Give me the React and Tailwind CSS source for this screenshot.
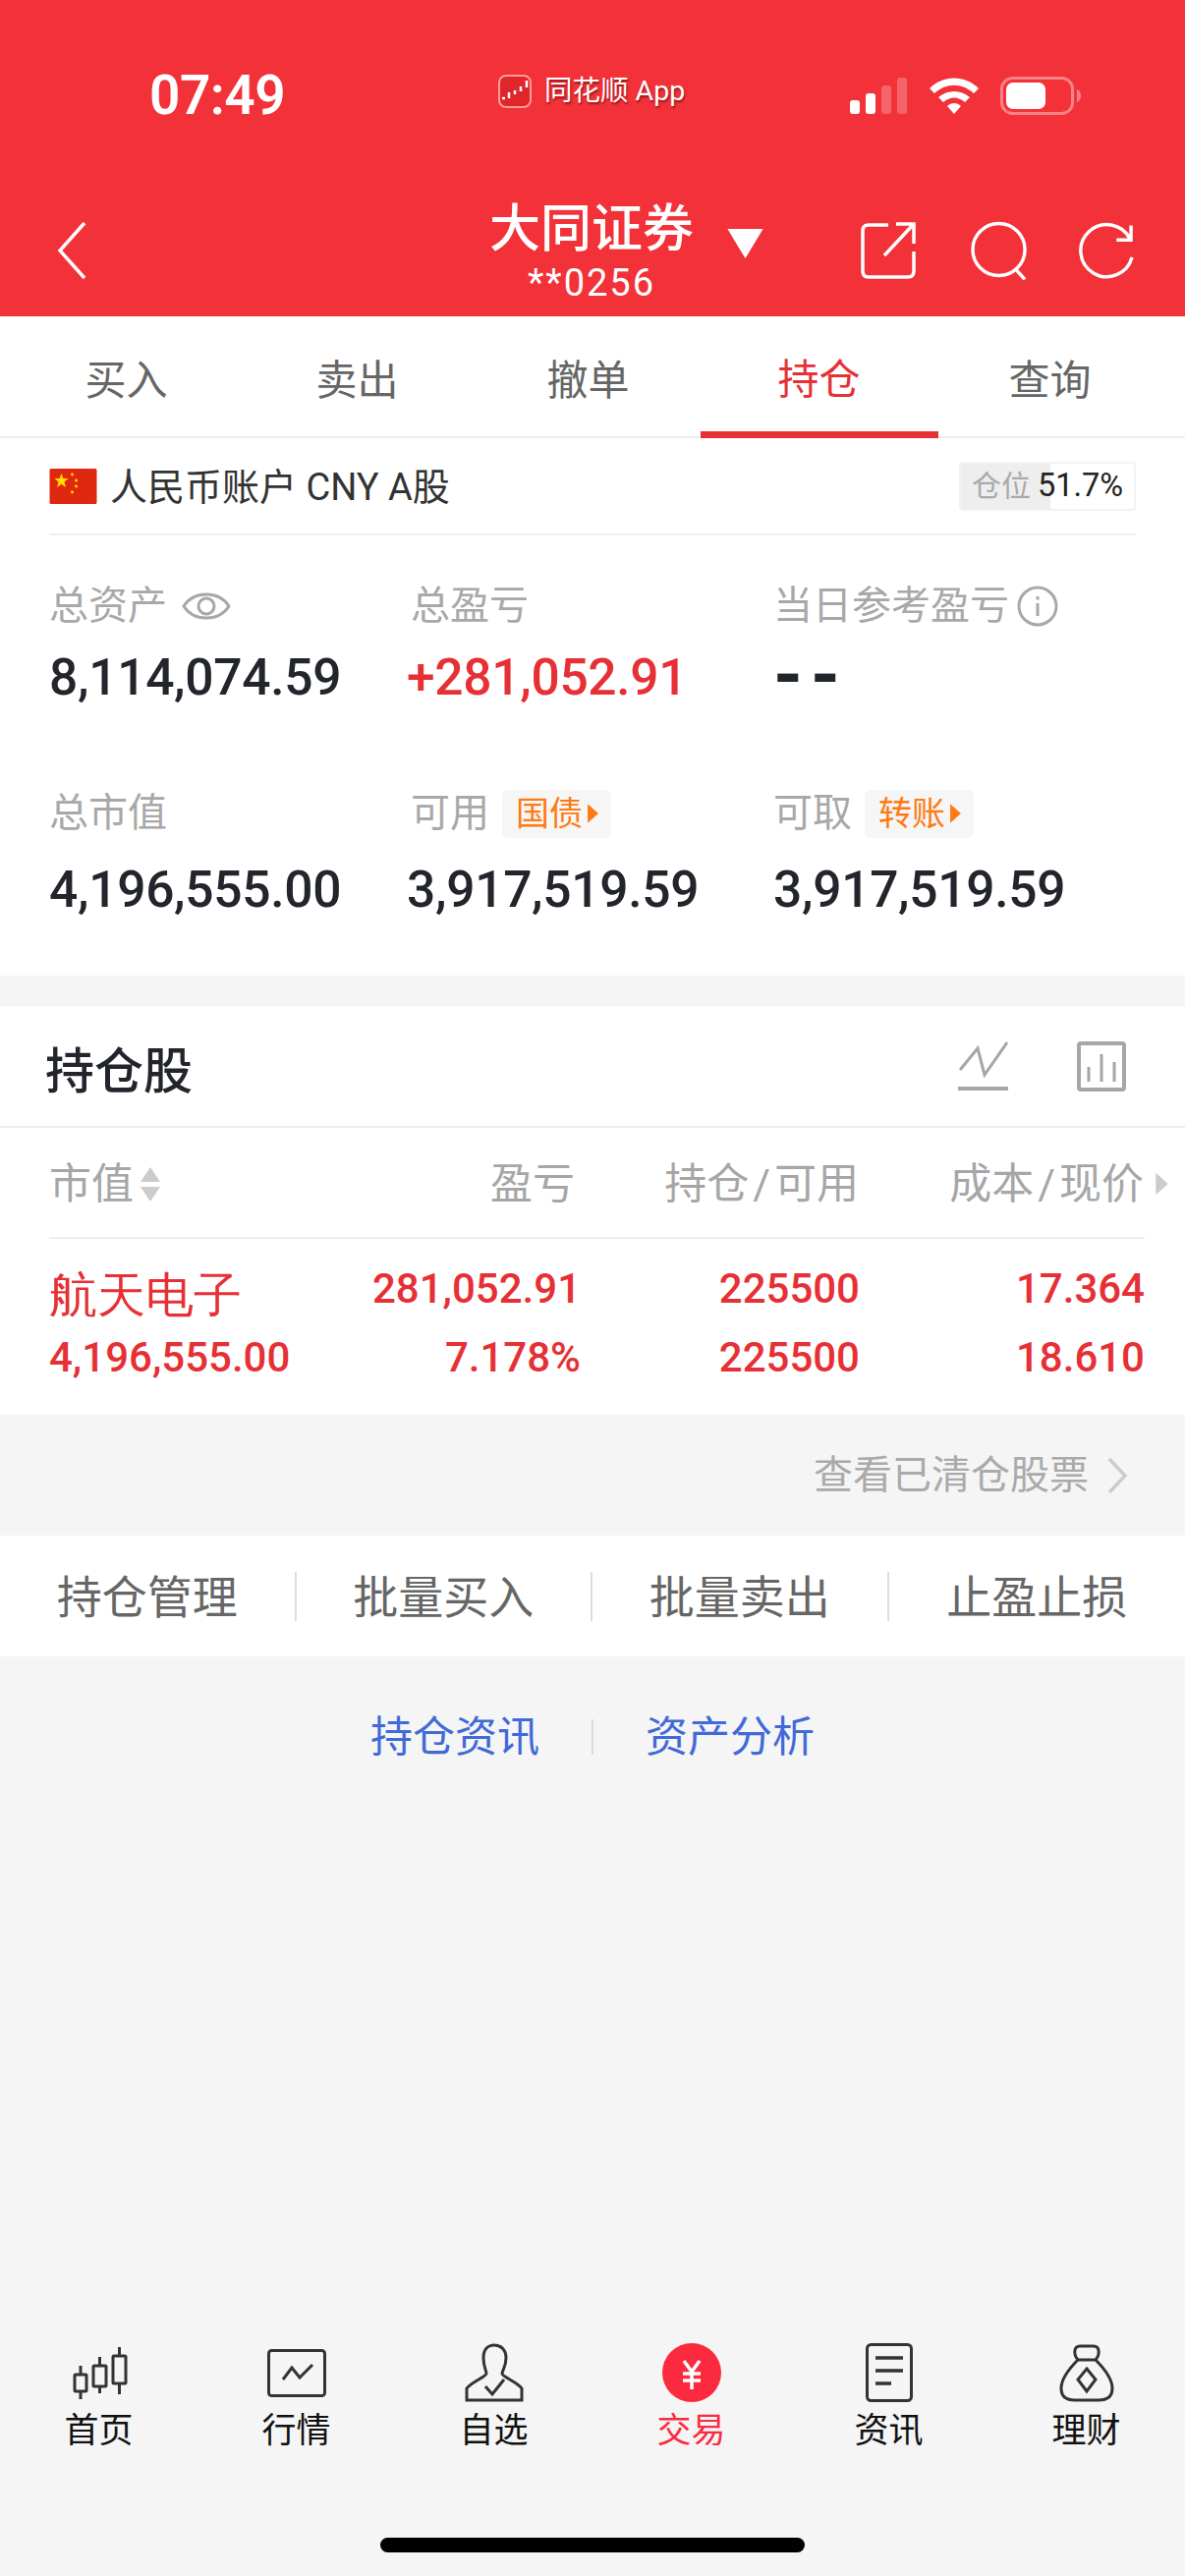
import React from 'react';

const RED = 'text-[#e63035]';

const Caret = ({ className }) => (
  <svg viewBox="0 0 12 20" className={className}>
    <polygon points="1,1 11,10 1,19" fill="currentColor" />
  </svg>
);

const StatusBar = () => (
  <div className="flex items-center h-[54px] mt-[70px] pl-[152px] text-white">
    <div className="w-[139px] text-[55px] font-semibold leading-none tracking-[-0.5px] font-['Roboto',sans-serif]">07:49</div>
    <div className="flex items-center mb-[8px] ml-[216px] w-[189px]">
      <svg viewBox="0 0 34 34" className="w-[34px] h-[34px] shrink-0">
        <rect x="1" y="1" width="32" height="32" rx="7" fill="#e0262b" stroke="#ff9a9a" strokeWidth="2" />
        <path d="M4 24h3M11 24v-6M17 20v-4M23 17v-5M29 13V6" stroke="#fff" strokeWidth="2.5" fill="none" />
      </svg>
      <span className="ml-[13px] text-[28.500px] leading-none whitespace-nowrap [text-shadow:1px_2px_2px_rgba(90,0,0,0.6)]">同花顺 App</span>
    </div>
    <svg viewBox="0 0 58 37" className="ml-[169px] w-[58px] h-[37px]">
      <rect x="0" y="23" width="10" height="14" rx="3" fill="#fff" />
      <rect x="16" y="16" width="10" height="21" rx="3" fill="#fff" />
      <rect x="32" y="8" width="10" height="29" rx="3" fill="#fff" fillOpacity="0.25" />
      <rect x="48" y="0" width="10" height="37" rx="3" fill="#fff" fillOpacity="0.25" />
    </svg>
    <svg viewBox="0 0 50 37" className="ml-[23px] w-[50px] h-[37px]">
      <path d="M0 11 C14 -3 36 -3 50 11 L45 16 C33 5 17 5 5 16 Z" fill="#fff" />
      <path d="M9 20 C18 12 32 12 41 20 L36 25 C29 19 21 19 14 25 Z" fill="#fff" />
      <path d="M18 29 C22 25 28 25 32 29 L25 37 Z" fill="#fff" />
    </svg>
    <svg viewBox="0 0 82 39" className="ml-[22px] w-[82px] h-[39px]">
      <rect x="1.5" y="1.5" width="72" height="36" rx="11" fill="none" stroke="#fff" strokeOpacity="0.4" strokeWidth="3" />
      <rect x="6" y="6" width="40" height="27" rx="7" fill="#fff" />
      <path d="M78 13 C81 14 82 17 82 19.5 C82 22 81 25 78 26 Z" fill="#fff" fillOpacity="0.4" />
    </svg>
  </div>
);

const NavBar = () => (
  <div className="flex items-center h-[110px] mt-[76px] pl-[58px] text-white">
    <svg viewBox="0 0 30 60" className="w-[30px] h-[60px]">
      <polyline points="28,2 3,30 28,58" fill="none" stroke="#fff" strokeWidth="3.5" />
    </svg>
    <div className="flex flex-col items-center gap-[5px] mt-[3px] ml-[411px] w-[206px]">
      <div className="h-[58px] flex items-center text-[52px] font-medium leading-none whitespace-nowrap">大同证券</div>
      <div className="h-[40px] flex items-center text-[38px] leading-none tracking-[2px] whitespace-nowrap font-['Roboto',sans-serif]">**0256</div>
    </div>
    <svg viewBox="0 0 35 29" className="ml-[35px] mb-[14px] w-[37px] h-[30px]">
      <polygon points="0,0 35,0 17.5,29" fill="#fff" />
    </svg>
    <svg viewBox="0 0 56 58" className="ml-[99px] w-[56px] h-[58px]" fill="none" stroke="#fff" strokeWidth="3.5">
      <path d="M28 3 H8 Q2 3 2 9 V50 Q2 56 8 56 H48 Q54 56 54 50 V30" />
      <path d="M24 34 L53 3 M36 2 H54 V22" />
    </svg>
    <svg viewBox="0 0 60 60" className="ml-[56px] w-[59px] h-[60px]" fill="none" stroke="#fff" strokeWidth="3.5">
      <circle cx="29" cy="29" r="27" />
      <path d="M46 49 L56 60" />
    </svg>
    <svg viewBox="0 0 58 58" className="ml-[50px] w-[57px] h-[58px]" fill="none" stroke="#fff" strokeWidth="3.5">
      <path d="M54 17 A27 27 0 1 0 56 36" />
      <path d="M55 3 V18 H40" />
    </svg>
  </div>
);

const tabs = ['买入', '卖出', '撤单', '持仓', '查询'];

const Tabs = () => (
  <div className="grid grid-cols-[repeat(5,235px)] px-[11px] h-[124px] border-b-2 border-[#eeeeee] bg-white">
    {tabs.map((t) => (
      <div
        key={t}
        className={
          t === '持仓'
            ? 'justify-self-center w-[242px] h-[124px] pt-[12px] flex items-center justify-center text-[42px] text-[#e63035] border-b-[7px] border-[#e63035]'
            : 'h-[122px] pt-[8px] flex items-center justify-center text-[42px] text-[#666666]'
        }
      >
        {t}
      </div>
    ))}
  </div>
);

const AccountRow = () => (
  <div className="flex items-center h-[99px] mx-[50px] border-b-2 border-[#f0f0f0]">
    <svg viewBox="0 0 48 36" className="w-[49px] h-[36px] rounded-[2px]">
      <rect width="48" height="36" fill="#de2910" />
      <polygon points="12,5 13.8,10 19,10 15,13.500 16.500,19 12,15.800 7.500,19 9,13.500 5,10 10.200,10" fill="#ffde00" />
      <circle cx="23" cy="6" r="1.400" fill="#ffde00" />
      <circle cx="27" cy="12" r="1.400" fill="#ffde00" />
      <circle cx="27" cy="18" r="1.400" fill="#ffde00" />
      <circle cx="23" cy="24" r="1.400" fill="#ffde00" />
    </svg>
    <span className="ml-[13px] pt-[3px] text-[38px] text-[#333333] whitespace-nowrap">人民币账户 CNY A股</span>
    <div className="ml-auto relative flex items-center w-[180px] h-[50px] border-2 border-[#f2f2f2] rounded-[4px] overflow-hidden">
      <div className="absolute left-0 top-0 bottom-0 w-[91px] bg-[#eeeeee]" />
      <span className="relative ml-[11px] text-[30px] text-[#aaaaaa] whitespace-nowrap">仓位</span>
      <span className="relative ml-[7px] text-[32.500px] text-[#222222] whitespace-nowrap font-['Roboto',sans-serif]">51.7%</span>
    </div>
  </div>
);

const Tag = ({ children }) => (
  <span className="ml-[13px] flex items-center w-[111px] h-[49px] pl-[14px] bg-[#f6f6f6] rounded-[6px] text-[34px] text-[#ff7a12] whitespace-nowrap">
    {children}
    <Caret className="w-[13px] h-[22px] ml-[4px]" />
  </span>
);

const Stat = ({ label, extra, value, color = 'text-[#22252b]', valueClass = 'mt-[18px]', shift = 'text-[51.500px] font-medium tracking-[-0.3px]' }) => (
  <div>
    <div className="flex items-center h-[50px]">
      <span className="text-[40px] text-[#a8a8a8] whitespace-nowrap">{label}</span>
      {extra}
    </div>
    <div className={`h-[60px] flex items-center leading-none whitespace-nowrap font-['Roboto',sans-serif] ${valueClass} ${color} ${shift}`}>
      {value}
    </div>
  </div>
);

const EyeIcon = () => (
  <svg viewBox="0 0 50 36" className="ml-[15px] w-[50px] h-[36px]" fill="none" stroke="#a8a8a8" strokeWidth="3">
    <path d="M2 18 C12 2 38 2 48 18 C38 34 12 34 2 18 Z" />
    <circle cx="25" cy="18" r="8" />
  </svg>
);

const InfoIcon = () => (
  <svg viewBox="0 0 42 42" className="ml-[8px] w-[42px] h-[42px]" fill="none" stroke="#a8a8a8" strokeWidth="3">
    <circle cx="21" cy="21" r="19" />
    <path d="M21 18 V31 M21 11 V14.500" />
  </svg>
);

const Stats = () => (
  <div className="grid grid-cols-[368px_369px_1fr] gap-y-[83px] pl-[50px] pt-[47px] pb-[57px]">
    <Stat label="总资产" extra={<EyeIcon />} value="8,114,074.59" />
    <Stat label="总盈亏" value="+281,052.91" color={RED} shift="ml-[-4px] text-[51.500px] font-medium tracking-[-0.3px]" />
    <Stat label="当日参考盈亏" extra={<InfoIcon />} value="--" valueClass="mt-[15px]" shift="text-[76px] font-bold tracking-[8px]" />
    <Stat label="总市值" value="4,196,555.00" valueClass="mt-[23px]" />
    <Stat label="可用" extra={<Tag>国债</Tag>} value="3,917,519.59" valueClass="mt-[23px]" shift="ml-[-4px] text-[51.500px] font-medium tracking-[-0.3px]" />
    <Stat label="可取" extra={<Tag>转账</Tag>} value="3,917,519.59" valueClass="mt-[23px]" />
  </div>
);

const HoldingsHeader = () => (
  <div className="flex items-center h-[124px] pl-[46px] border-b-2 border-[#eeeeee]">
    <span className="mt-[12px] text-[50px] font-medium text-[#22252b]">持仓股</span>
    <svg viewBox="0 0 51 51" className="ml-auto w-[51px] h-[51px]" fill="none" stroke="#a6a6a6" strokeWidth="3">
      <polyline points="2,29 20,7 27,34 50,1" />
      <path d="M0 48 H51" strokeWidth="4" />
    </svg>
    <svg viewBox="0 0 50 51" className="ml-[70px] mr-[60px] w-[50px] h-[51px]" fill="none" stroke="#a6a6a6" strokeWidth="4">
      <rect x="2" y="2" width="46" height="47" rx="2" />
      <path d="M12 26 V41 M25 13 V41 M38 21 V41" strokeWidth="3" />
    </svg>
  </div>
);

const TableHeader = () => (
  <div className="grid grid-cols-[250px_290px_284px_290px] items-center h-[113px] pt-[4px] ml-[50px] mr-[41px] border-b-2 border-[#eeeeee] text-[43px] text-[#a6a6a6] relative">
    <div className="flex items-center">
      <span>市值</span>
      <svg viewBox="0 0 22 36" className="ml-[6px] w-[22px] h-[36px]">
        <polygon points="11,0 21,15 1,15" fill="#cccccc" />
        <polygon points="1,20 21,20 11,35" fill="#cccccc" />
      </svg>
    </div>
    <div className="text-right pr-[5px]">盈亏</div>
    <div className="text-right whitespace-nowrap">持仓<span className="mx-[4px] font-['Roboto',sans-serif]">/</span>可用</div>
    <div className="text-right whitespace-nowrap">成本<span className="mx-[4px] font-['Roboto',sans-serif]">/</span>现价</div>
    <Caret className="absolute left-[1125px] top-[43px] w-[15px] h-[28px] text-[#cccccc]" />
  </div>
);

const HoldingRow = () => (
  <div className="pt-[16px] pb-[23px] pl-[50px] pr-[41px] text-[42px] font-medium leading-none text-[#e63035] font-['Roboto',sans-serif]">
    <div className="grid grid-cols-[250px_291px_284px_290px] items-center h-[70px]">
      <div className="pt-[12px] text-[49px] font-normal whitespace-nowrap">航天电子</div>
      <div className="text-right">281,052.91</div>
      <div className="text-right">225500</div>
      <div className="text-right">17.364</div>
    </div>
    <div className="grid grid-cols-[250px_291px_284px_290px] items-center h-[70px]">
      <div className="whitespace-nowrap">4,196,555.00</div>
      <div className="text-right">7.178%</div>
      <div className="text-right">225500</div>
      <div className="text-right">18.610</div>
    </div>
  </div>
);

const actions = ['持仓管理', '批量买入', '批量卖出', '止盈止损'];

const Actions = () => (
  <div className="grid grid-cols-4 items-center h-[123px] bg-white">
    {actions.map((a) => (
      <div key={a} className="h-[50px] flex items-center justify-center text-[46px] text-[#666666] border-r-2 border-[#dddddd] last:border-r-0 whitespace-nowrap">
        <span className="pt-[4px]">{a}</span>
      </div>
    ))}
  </div>
);

const navItems = [
  {
    label: '首页',
    icon: (
      <svg viewBox="0 0 60 60" className="w-[60px] h-[60px]" fill="none" stroke="#333333" strokeWidth="3">
        <rect x="5" y="32" width="12" height="17" rx="1" />
        <path d="M11 23 V32 M11 49 V57" />
        <rect x="24" y="23" width="13" height="21" rx="1" />
        <path d="M30.500 14 V23 M30.500 44 V51" />
        <rect x="44" y="13" width="13" height="28" rx="1" />
        <path d="M50.500 4 V13 M50.500 41 V52" />
      </svg>
    ),
  },
  {
    label: '行情',
    icon: (
      <svg viewBox="0 0 60 60" className="w-[60px] h-[60px]" fill="none" stroke="#333333" strokeWidth="3">
        <rect x="1.500" y="7.500" width="57" height="46" rx="3" />
        <polyline points="16,37 25,25 33,35 46,22" />
      </svg>
    ),
  },
  {
    label: '自选',
    icon: (
      <svg viewBox="0 0 60 60" className="w-[60px] h-[60px]" fill="none" stroke="#333333" strokeWidth="3">
        <path d="M19 15 C19 6 24 2 30 2 C36 2 42 6 42 15 C42 24 38 28 38 31 C38 34 54 40 58 46 L58 58 L2 58 L2 46 C6 40 22 34 22 31 C22 28 19 24 19 15 Z" />
        <polyline points="21,44 28,52 40,37" />
      </svg>
    ),
  },
  {
    label: '交易',
    active: true,
    icon: (
      <svg viewBox="0 0 60 60" className="w-[60px] h-[60px]">
        <circle cx="30" cy="30" r="30" fill="#fc2a3e" />
        <path d="M22 18 L30 29 L38 18 M21 31 H39 M21 38 H39 M30 29 V47" fill="none" stroke="#ffffff" strokeWidth="3.500" />
      </svg>
    ),
  },
  {
    label: '资讯',
    icon: (
      <svg viewBox="0 0 48 60" className="w-[48px] h-[60px]" fill="none" stroke="#333333" strokeWidth="3">
        <rect x="1.500" y="1.500" width="45" height="57" rx="4" />
        <path d="M10 15 H38 M10 28 H38 M10 41 H26" strokeWidth="3.500" />
      </svg>
    ),
  },
  {
    label: '理财',
    icon: (
      <svg viewBox="0 0 56 60" className="w-[56px] h-[60px]" fill="none" stroke="#333333" strokeWidth="3">
        <path d="M19 17 C9 27 2 38 2 46 C2 55 8 58 16 58 L40 58 C48 58 54 55 54 46 C54 38 47 27 37 17 Z" />
        <path d="M19 17 C14 11 15 3 21 3 L35 3 C41 3 42 11 37 17" />
        <polygon points="28,26 37,37 28,49 19,37" />
      </svg>
    ),
  },
];

const BottomNav = () => (
  <div className="grid grid-cols-6">
    {navItems.map((n) => (
      <div key={n.label} className="flex flex-col items-center">
        <div className="h-[60px] flex items-center justify-center">{n.icon}</div>
        <div className={n.active ? 'mt-[10px] h-[40px] flex items-center text-[35px] text-[#fc2a3e]' : 'mt-[10px] h-[40px] flex items-center text-[35px] text-[#111111]'}>
          {n.label}
        </div>
      </div>
    ))}
  </div>
);

export default function App() {
  return (
    <div className="w-[1206px] h-[2622px] flex flex-col bg-[#f5f5f5] overflow-hidden font-['Roboto','Noto_Sans_CJK_SC',sans-serif]">
      <div className="h-[322px] bg-[#f23139] flex flex-col">
        <StatusBar />
        <NavBar />
      </div>
      <Tabs />
      <div className="bg-white">
        <AccountRow />
        <Stats />
      </div>
      <div className="h-[31px]" />
      <div className="bg-white">
        <HoldingsHeader />
        <TableHeader />
        <HoldingRow />
      </div>
      <div className="h-[123px] flex items-center justify-end pr-[58px]">
        <span className="text-[40px] text-[#aaaaaa] whitespace-nowrap">查看已清仓股票</span>
        <svg viewBox="0 0 21 38" className="ml-[19px] w-[21px] h-[38px]" fill="none" stroke="#cccccc" strokeWidth="3.500">
          <polyline points="2,2 18,19 2,36" />
        </svg>
      </div>
      <Actions />
      <div className="flex items-center justify-center gap-[53px] mt-[63px] pt-[2px] h-[36px] text-[43px] text-[#4169d8]">
        <span className="whitespace-nowrap">持仓资讯</span>
        <div className="w-[2px] h-[36px] bg-[#dddddd]" />
        <span className="whitespace-nowrap">资产分析</span>
      </div>
      <div className="mt-auto">
        <BottomNav />
        <div className="mt-[88px] mb-[24px] mx-auto w-[432px] h-[15px] rounded-full bg-black" />
      </div>
    </div>
  );
}
